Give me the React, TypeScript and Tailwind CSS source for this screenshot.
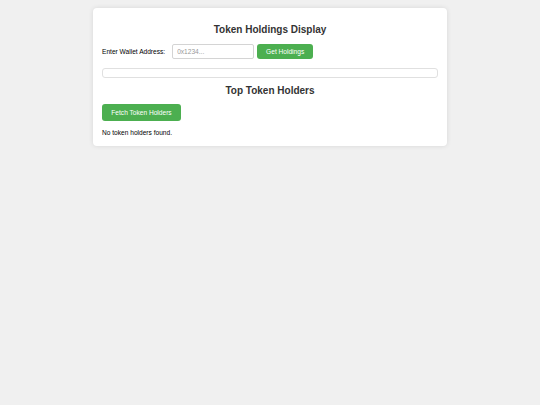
import React from "react";

const App = () => {
  return (
    <div className="min-h-screen bg-[#f0f0f0] pt-[8px] font-['Liberation_Sans',Arial,sans-serif] text-[#333]">
      <div className="mx-auto w-[354px] bg-white rounded-[4px] shadow-[0_0_5px_rgba(0,0,0,0.1)] px-[9px] pt-[9px] pb-[9px]">
        <h2 className="mt-[7px] text-center text-[10px] leading-[12px] font-bold">
          Token Holdings Display
        </h2>
        <div className="mt-[8px] flex items-center h-[15px]">
          <label className="text-[6.6px] leading-[8px] text-black">Enter Wallet Address:</label>
          <input
            type="text"
            placeholder="0x1234..."
            className="ml-[7px] h-[15px] w-[82px] border border-[#d4d4d4] rounded-[2px] px-[4px] text-[6.6px] placeholder:text-[#999] outline-none"
          />
          <button className="ml-[3px] h-[15px] w-[56px] bg-[#4caf50] text-white text-[6.6px] rounded-[3px]">
            Get Holdings
          </button>
        </div>
        <div className="mt-[9px] h-[10px] border border-[#e0e0e0] rounded-[3px]"></div>
        <h2 className="mt-[7px] text-center text-[10px] leading-[12px] font-bold">
          Top Token Holders
        </h2>
        <button className="mt-[7px] h-[17px] w-[79px] bg-[#4caf50] text-white text-[6.6px] rounded-[3px]">
          Fetch Token Holders
        </button>
        <p className="mt-[7px] text-[6.6px] leading-[8px] text-black">No token holders found.</p>
      </div>
    </div>
  );
};

export default App;
